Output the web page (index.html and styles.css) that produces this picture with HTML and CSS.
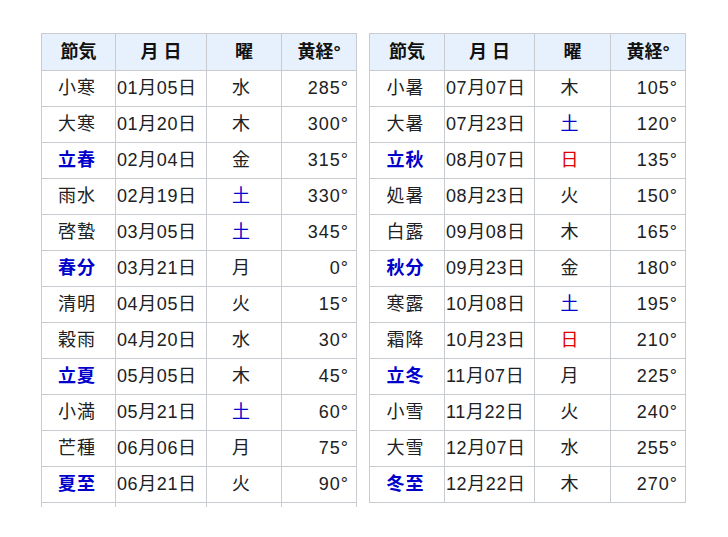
FILE: index.html
```html
<!DOCTYPE html>
<html lang="ja">
<head>
<meta charset="utf-8">
<link rel="stylesheet" href="styles.css">
</head>
<body>
<div class="page">
  <div class="clip">
  <table class="tbl left">
    <colgroup><col class="c1"><col class="c2"><col class="c3"><col class="c4"></colgroup>
    <thead><tr><th>節気</th><th>月 日</th><th>曜</th><th>黄経°</th></tr></thead>
    <tbody>
      <tr><td class="n">小寒</td><td class="d">01月05日</td><td class="w">水</td><td class="g">285°</td></tr>
      <tr><td class="n">大寒</td><td class="d">01月20日</td><td class="w">木</td><td class="g">300°</td></tr>
      <tr><td class="n key">立春</td><td class="d">02月04日</td><td class="w">金</td><td class="g">315°</td></tr>
      <tr><td class="n">雨水</td><td class="d">02月19日</td><td class="w sat">土</td><td class="g">330°</td></tr>
      <tr><td class="n">啓蟄</td><td class="d">03月05日</td><td class="w sat">土</td><td class="g">345°</td></tr>
      <tr><td class="n key">春分</td><td class="d">03月21日</td><td class="w">月</td><td class="g">0°</td></tr>
      <tr><td class="n">清明</td><td class="d">04月05日</td><td class="w">火</td><td class="g">15°</td></tr>
      <tr><td class="n">穀雨</td><td class="d">04月20日</td><td class="w">水</td><td class="g">30°</td></tr>
      <tr><td class="n key">立夏</td><td class="d">05月05日</td><td class="w">木</td><td class="g">45°</td></tr>
      <tr><td class="n">小満</td><td class="d">05月21日</td><td class="w sat">土</td><td class="g">60°</td></tr>
      <tr><td class="n">芒種</td><td class="d">06月06日</td><td class="w">月</td><td class="g">75°</td></tr>
      <tr><td class="n key">夏至</td><td class="d">06月21日</td><td class="w">火</td><td class="g">90°</td></tr>
      <tr><td class="n">&nbsp;</td><td class="d"></td><td class="w"></td><td class="g"></td></tr>
    </tbody>
  </table>
  </div>
  <table class="tbl right">
    <colgroup><col class="r1"><col class="r2"><col class="r3"><col class="r4"></colgroup>
    <thead><tr><th>節気</th><th>月 日</th><th>曜</th><th>黄経°</th></tr></thead>
    <tbody>
      <tr><td class="n">小暑</td><td class="d">07月07日</td><td class="w">木</td><td class="g">105°</td></tr>
      <tr><td class="n">大暑</td><td class="d">07月23日</td><td class="w sat">土</td><td class="g">120°</td></tr>
      <tr><td class="n key">立秋</td><td class="d">08月07日</td><td class="w sun">日</td><td class="g">135°</td></tr>
      <tr><td class="n">処暑</td><td class="d">08月23日</td><td class="w">火</td><td class="g">150°</td></tr>
      <tr><td class="n">白露</td><td class="d">09月08日</td><td class="w">木</td><td class="g">165°</td></tr>
      <tr><td class="n key">秋分</td><td class="d">09月23日</td><td class="w">金</td><td class="g">180°</td></tr>
      <tr><td class="n">寒露</td><td class="d">10月08日</td><td class="w sat">土</td><td class="g">195°</td></tr>
      <tr><td class="n">霜降</td><td class="d">10月23日</td><td class="w sun">日</td><td class="g">210°</td></tr>
      <tr><td class="n key">立冬</td><td class="d">11月07日</td><td class="w">月</td><td class="g">225°</td></tr>
      <tr><td class="n">小雪</td><td class="d">11月22日</td><td class="w">火</td><td class="g">240°</td></tr>
      <tr><td class="n">大雪</td><td class="d">12月07日</td><td class="w">水</td><td class="g">255°</td></tr>
      <tr><td class="n key">冬至</td><td class="d">12月22日</td><td class="w">木</td><td class="g">270°</td></tr>
    </tbody>
  </table>
</div>
</body>
</html>
```
FILE: styles.css
```css
html, body {
  margin: 0;
  padding: 0;
  background: #ffffff;
}
body {
  font-family: "Liberation Sans", "Noto Sans CJK JP", sans-serif;
  font-size: 18px;
  line-height: 22px;
  color: #202122;
}
.page {
  display: flex;
  align-items: flex-start;
  gap: 12px;
  padding: 33px 0 0 41px;
}
.clip {
  height: 474px;
  overflow: hidden;
}
.tbl {
  border-collapse: collapse;
  table-layout: fixed;
}
.tbl.left { width: 316px; }
.tbl.right { width: 317px; }
.c1 { width: 74px; }
.c2 { width: 91px; }
.c3 { width: 75px; }
.c4 { width: 75px; }
.r1 { width: 75px; }
.r2 { width: 90px; }
.r3 { width: 76px; }
.r4 { width: 75px; }
.tbl th, .tbl td {
  border: 1px solid #c8ccd1;
  padding: 0 7px;
  white-space: nowrap;
  overflow: visible;
}
.tbl th {
  background: #e7f1fd;
  height: 36px;
  font-weight: bold;
  text-align: center;
  color: #111;
}
.tbl td {
  height: 34px;
  letter-spacing: 1px;
  padding-bottom: 1px;
}
.tbl td.n { text-align: center; padding-right: 10px; }
.tbl td.d { text-align: left; padding-left: 1px; padding-right: 0; letter-spacing: 0.6px; }
.tbl td.w { text-align: center; padding-right: 12px; }
.tbl td.g { text-align: right; padding-right: 7px; }
.key { color: #0000cc; font-weight: bold; }
.sat { color: #0000cc; }
.sun { color: #dd0000; }
```
